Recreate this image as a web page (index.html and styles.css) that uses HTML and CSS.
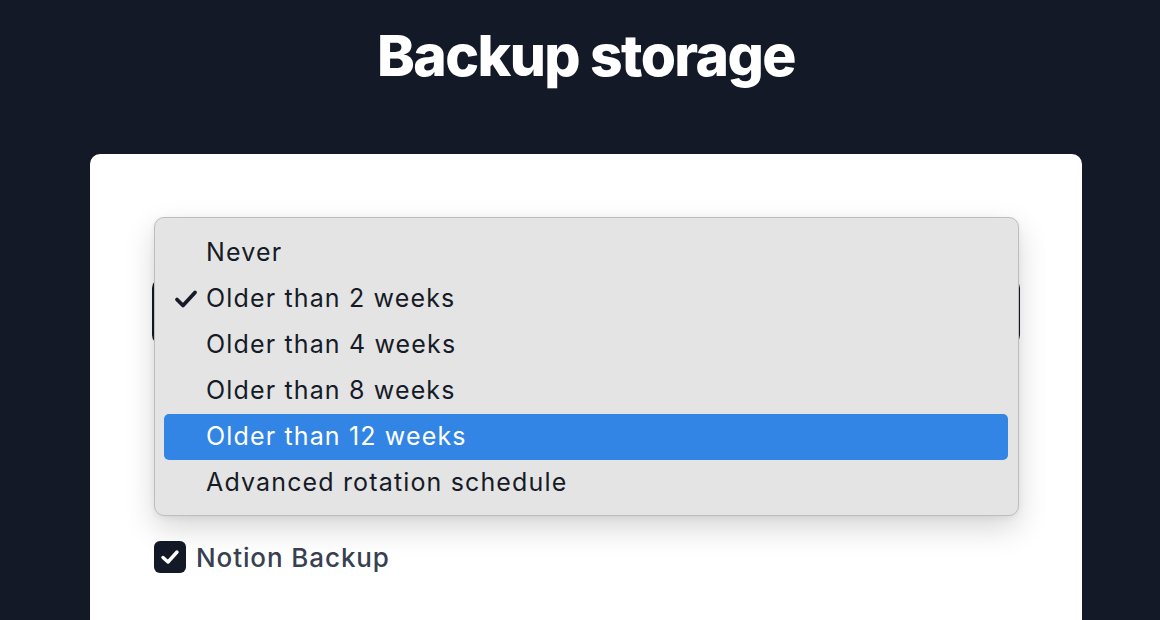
FILE: index.html
```html
<!DOCTYPE html>
<html lang="en">
<head>
<meta charset="utf-8">
<title>Backup storage</title>
<link rel="stylesheet" href="styles.css">
</head>
<body>
<main class="page">
  <h1 class="title">Backup storage</h1>
  <section class="card">
    <div class="select-wrap">
      <div class="select" aria-hidden="true"></div>
      <ul class="menu" role="listbox">
        <li class="option">Never</li>
        <li class="option checked">
          <svg class="tick" viewBox="0 0 26 20" width="26" height="20"><path d="M4 10.5 L10 16.5 L22 3.5" fill="none" stroke="#161b27" stroke-width="3.8" stroke-linecap="round" stroke-linejoin="round"/></svg>
          Older than 2 weeks
        </li>
        <li class="option">Older than 4 weeks</li>
        <li class="option">Older than 8 weeks</li>
        <li class="option active">Older than 12 weeks</li>
        <li class="option">Advanced rotation schedule</li>
      </ul>
    </div>
    <label class="check">
      <span class="box">
        <svg viewBox="0 0 32 32" width="32" height="32"><path d="M9 16.5 L14 21 L23 11" fill="none" stroke="#fff" stroke-width="3.4" stroke-linecap="round" stroke-linejoin="round"/></svg>
      </span>
      <span class="check-label">Notion Backup</span>
    </label>
  </section>
</main>
</body>
</html>
```

FILE: styles.css
```css
* { box-sizing: border-box; }

html, body {
  margin: 0;
  height: 100%;
}

body {
  background: #131926;
  font-family: Inter, "Noto Sans", "Liberation Sans", sans-serif;
  overflow: hidden;
}

.page {
  width: 992px;
  margin-left: 90px;
  display: flex;
  flex-direction: column;
}

.title {
  margin: 22px 0 0;
  height: 132px;
  text-align: center;
  color: #fff;
  font-size: 57px;
  font-weight: 800;
  letter-spacing: -0.028em;
  line-height: 68px;
}

.card {
  background: #fff;
  border-radius: 10px;
  padding: 126px 64px 80px;
  min-height: 520px;
}

.select-wrap {
  position: relative;
  height: 63px;
}

.select {
  height: 63px;
  border-radius: 8px;
  box-shadow: 0 0 0 2px #131926;
  background: #fff;
}

.menu {
  position: absolute;
  left: 0;
  right: -1px;
  top: -63px;
  margin: 0;
  padding: 12px 10px 9px 9px;
  list-style: none;
  background: #e4e4e4;
  border: 1px solid #bdbdbd;
  border-radius: 10px;
  box-shadow: 0 12px 30px rgba(0, 0, 0, 0.16), 0 2px 6px rgba(0, 0, 0, 0.06);
  z-index: 2;
}

.option {
  position: relative;
  height: 46px;
  line-height: 45px;
  padding-left: 42px;
  font-size: 25px;
  color: #161b27;
  border-radius: 5px;
  letter-spacing: 1.15px;
}

.option.active {
  background: #3284e5;
  color: #fff;
}

.tick {
  position: absolute;
  left: 9px;
  top: 13px;
}

.check {
  display: flex;
  align-items: center;
  gap: 10px;
  margin-top: 198px;
}

.box {
  width: 32px;
  height: 32px;
  border-radius: 6px;
  background: #131926;
  display: flex;
}

.check-label {
  font-size: 26px;
  font-weight: 500;
  color: #374151;
  letter-spacing: 0.9px;
}
```
